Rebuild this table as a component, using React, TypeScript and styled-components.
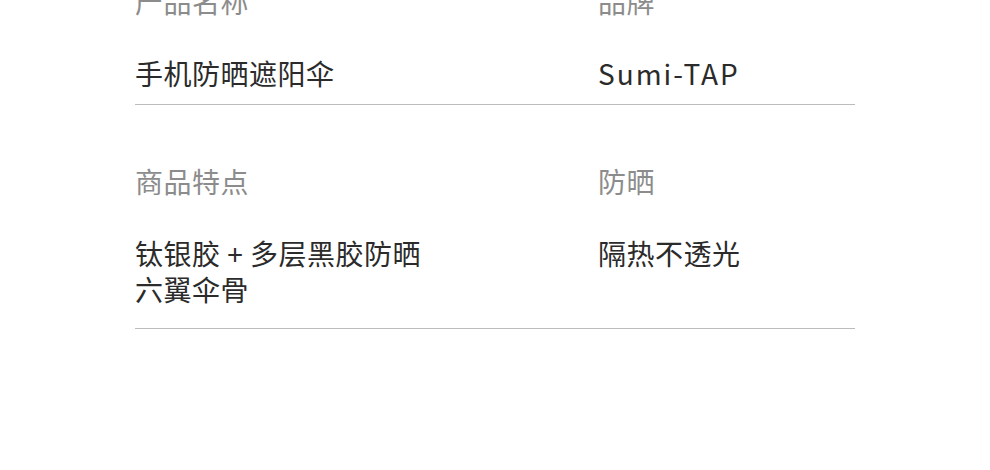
import React from 'react';
import styled, { createGlobalStyle } from 'styled-components';

const GlobalStyle = createGlobalStyle`
  html, body {
    margin: 0;
    padding: 0;
    background: #ffffff;
    overflow: hidden;
  }
  body {
    font-family: "Noto Sans CJK SC", "Noto Sans", sans-serif;
  }
`;

const Page = styled.div`
  width: 990px;
  height: 470px;
  overflow: hidden;
  background: #ffffff;
`;

const Spec = styled.div`
  width: 720px;
  margin: -17px 0 0 135px;
`;

const Section = styled.section<{ $top: number; $bottom: number }>`
  display: grid;
  grid-template-columns: 463px 1fr;
  row-gap: 36px;
  padding: ${(p) => p.$top}px 0 ${(p) => p.$bottom}px;
  border-bottom: 1.5px solid #bcbcbc;
`;

const Label = styled.div`
  font-size: 28px;
  line-height: 36px;
  letter-spacing: 0.5px;
  color: #8c8c8c;
  white-space: nowrap;
`;

const Value = styled.div`
  font-size: 28px;
  line-height: 36px;
  letter-spacing: 0.5px;
  color: #2b2b2b;
  white-space: nowrap;
`;

const Line = styled.div<{ $latin?: boolean }>`
  letter-spacing: ${(p) => (p.$latin ? '2px' : 'inherit')};
`;

type Field = { label: string; value: string[]; latin?: boolean };

const rows: { top: number; bottom: number; fields: Field[] }[] = [
  {
    top: 0,
    bottom: 13,
    fields: [
      { label: '产品名称', value: ['手机防晒遮阳伞'] },
      { label: '品牌', value: ['Sumi-TAP'], latin: true },
    ],
  },
  {
    top: 58,
    bottom: 21,
    fields: [
      { label: '商品特点', value: ['钛银胶 + 多层黑胶防晒', '六翼伞骨'] },
      { label: '防晒', value: ['隔热不透光'] },
    ],
  },
];

export default function App() {
  return (
    <Page>
      <GlobalStyle />
      <Spec>
        {rows.map((row, i) => (
          <Section key={i} $top={row.top} $bottom={row.bottom}>
            {row.fields.map((f) => (
              <Label key={f.label}>{f.label}</Label>
            ))}
            {row.fields.map((f) => (
              <Value key={f.label}>
                {f.value.map((line) => (
                  <Line key={line} $latin={f.latin}>
                    {line}
                  </Line>
                ))}
              </Value>
            ))}
          </Section>
        ))}
      </Spec>
    </Page>
  );
}
